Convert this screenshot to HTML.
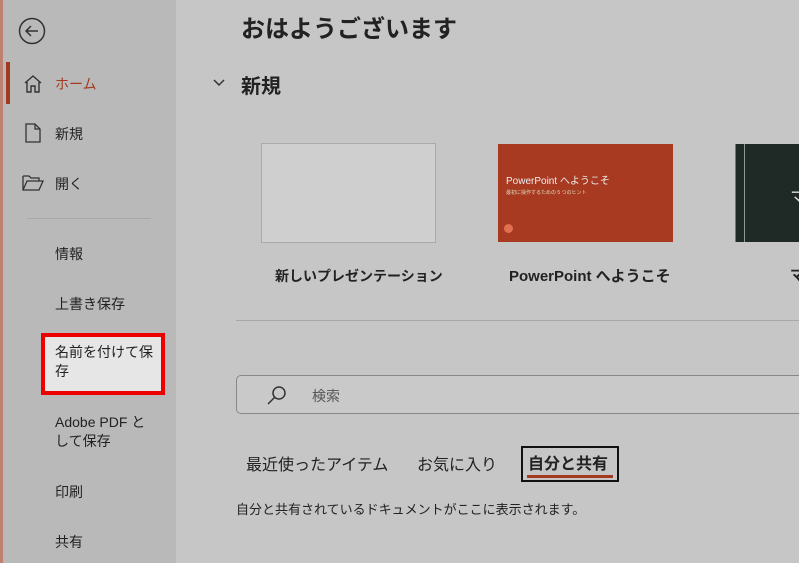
<!DOCTYPE html>
<html><head><meta charset="utf-8"><style>
*{margin:0;padding:0;box-sizing:border-box}
body{width:799px;height:563px;overflow:hidden;background:#c6c6c6;font-family:"Liberation Sans","Noto Sans CJK JP",sans-serif;color:#222;position:relative}
.side{position:absolute;left:0;top:0;width:176px;height:563px;background:#b9b9b9;border-left:3px solid #c08070}
.a{position:absolute;font-size:14px}
.sep{position:absolute;left:27px;top:218px;width:124px;height:1px;background:#a8a8a8}
</style></head><body>
<div class="side"></div>
<svg style="position:absolute;left:18px;top:17px" width="28" height="28" viewBox="0 0 28 28"><circle cx="14" cy="14" r="12.5" fill="none" stroke="#333" stroke-width="1.5"/><path d="M8 14H20M13 9L8 14L13 19" fill="none" stroke="#333" stroke-width="1.5"/></svg>
<div style="position:absolute;left:6px;top:62px;width:4px;height:42px;background:#a33a20"></div>
<svg style="position:absolute;left:23px;top:74px" width="20" height="20" viewBox="0 0 20 20"><path d="M2 9L10 2L18 9M4 8V18H8V12H12V18H16V8" fill="none" stroke="#333" stroke-width="1.4"/></svg>
<div class="a" style="left:55px;top:74px;color:#a33a20">ホーム</div>
<svg style="position:absolute;left:24px;top:123px" width="18" height="20" viewBox="0 0 18 20"><path d="M2 1H11L16 6V19H2Z" fill="none" stroke="#333" stroke-width="1.3"/><path d="M11 1V6H16" fill="none" stroke="#333" stroke-width="1.3"/></svg>
<div class="a" style="left:55px;top:124px">新規</div>
<svg style="position:absolute;left:22px;top:174px" width="22" height="18" viewBox="0 0 22 18"><path d="M1 2H7L9 4H17V7M1 2V16H17L21 7H5L1 16" fill="none" stroke="#333" stroke-width="1.3"/></svg>
<div class="a" style="left:55px;top:174px">開く</div>
<div class="sep"></div>
<div class="a" style="left:55px;top:244px">情報</div>
<div class="a" style="left:55px;top:294px">上書き保存</div>
<div style="position:absolute;left:41px;top:333px;width:124px;height:62px;background:#e6e6e6;border:4px solid #ee0000"></div>
<div class="a" style="left:55px;top:343px;line-height:19px">名前を付けて保<br>存</div>
<div class="a" style="left:55px;top:413px;line-height:19px">Adobe PDF と<br>して保存</div>
<div class="a" style="left:55px;top:482px">印刷</div>
<div class="a" style="left:55px;top:532px">共有</div>
<div class="a" style="left:241px;top:9px;font-size:24px;font-weight:bold">おはようございます</div>
<svg style="position:absolute;left:212px;top:78px" width="14" height="10" viewBox="0 0 14 10"><path d="M2 2L7 7L12 2" fill="none" stroke="#333" stroke-width="1.5"/></svg>
<div class="a" style="left:241px;top:70px;font-size:20px;font-weight:bold">新規</div>
<div style="position:absolute;left:261px;top:143px;width:175px;height:100px;background:#cfcfcf;border:1px solid #aaa"></div>
<div style="position:absolute;left:498px;top:144px;width:175px;height:98px;background:#a83a22;color:#f0d0c8">
<div style="position:absolute;left:8px;top:28px;font-size:10px;color:#eee">PowerPoint へようこそ</div>
<div style="position:absolute;left:8px;top:45px;font-size:5px;color:#ddb">最初に操作するための 5 つのヒント</div>
<div style="position:absolute;left:6px;top:80px;width:9px;height:9px;border-radius:50%;background:#e07050"></div></div>
<div style="position:absolute;left:735px;top:144px;width:64px;height:98px;background:#1f2a27;border-left:1px solid #6a7a74"></div>
<div style="position:absolute;left:744px;top:144px;width:1px;height:98px;background:#8a9a94"></div>
<div class="a" style="left:790px;top:184px;color:#ddd;font-size:18px">マ</div>
<div class="a" style="left:275px;top:266px;font-weight:bold">新しいプレゼンテーション</div>
<div class="a" style="left:509px;top:265px;font-size:15px;font-weight:bold">PowerPoint へようこそ</div>
<div class="a" style="left:790px;top:265px;font-weight:bold">マ</div>
<div style="position:absolute;left:236px;top:320px;width:563px;height:1px;background:#a8a8a8"></div>
<div style="position:absolute;left:236px;top:375px;width:580px;height:39px;border:1px solid #888;border-radius:5px;background:#c9c9c9"></div>
<svg style="position:absolute;left:266px;top:384px" width="22" height="22" viewBox="0 0 22 22"><circle cx="13" cy="9" r="6" fill="none" stroke="#333" stroke-width="1.5"/><path d="M9 13L2 20" stroke="#333" stroke-width="1.5"/></svg>
<div class="a" style="left:312px;top:386px;color:#555">検索</div>
<div class="a" style="left:246px;top:451px;font-size:16px">最近使ったアイテム</div>
<div class="a" style="left:417px;top:451px;font-size:16px">お気に入り</div>
<div style="position:absolute;left:521px;top:446px;width:98px;height:36px;border:2px solid #111"></div>
<div class="a" style="left:528px;top:450px;font-size:16px;font-weight:bold">自分と共有</div>
<div style="position:absolute;left:527px;top:475px;width:86px;height:3px;background:#a33a20"></div>
<div class="a" style="left:236px;top:499px;font-size:13px">自分と共有されているドキュメントがここに表示されます。</div>
</body></html>
